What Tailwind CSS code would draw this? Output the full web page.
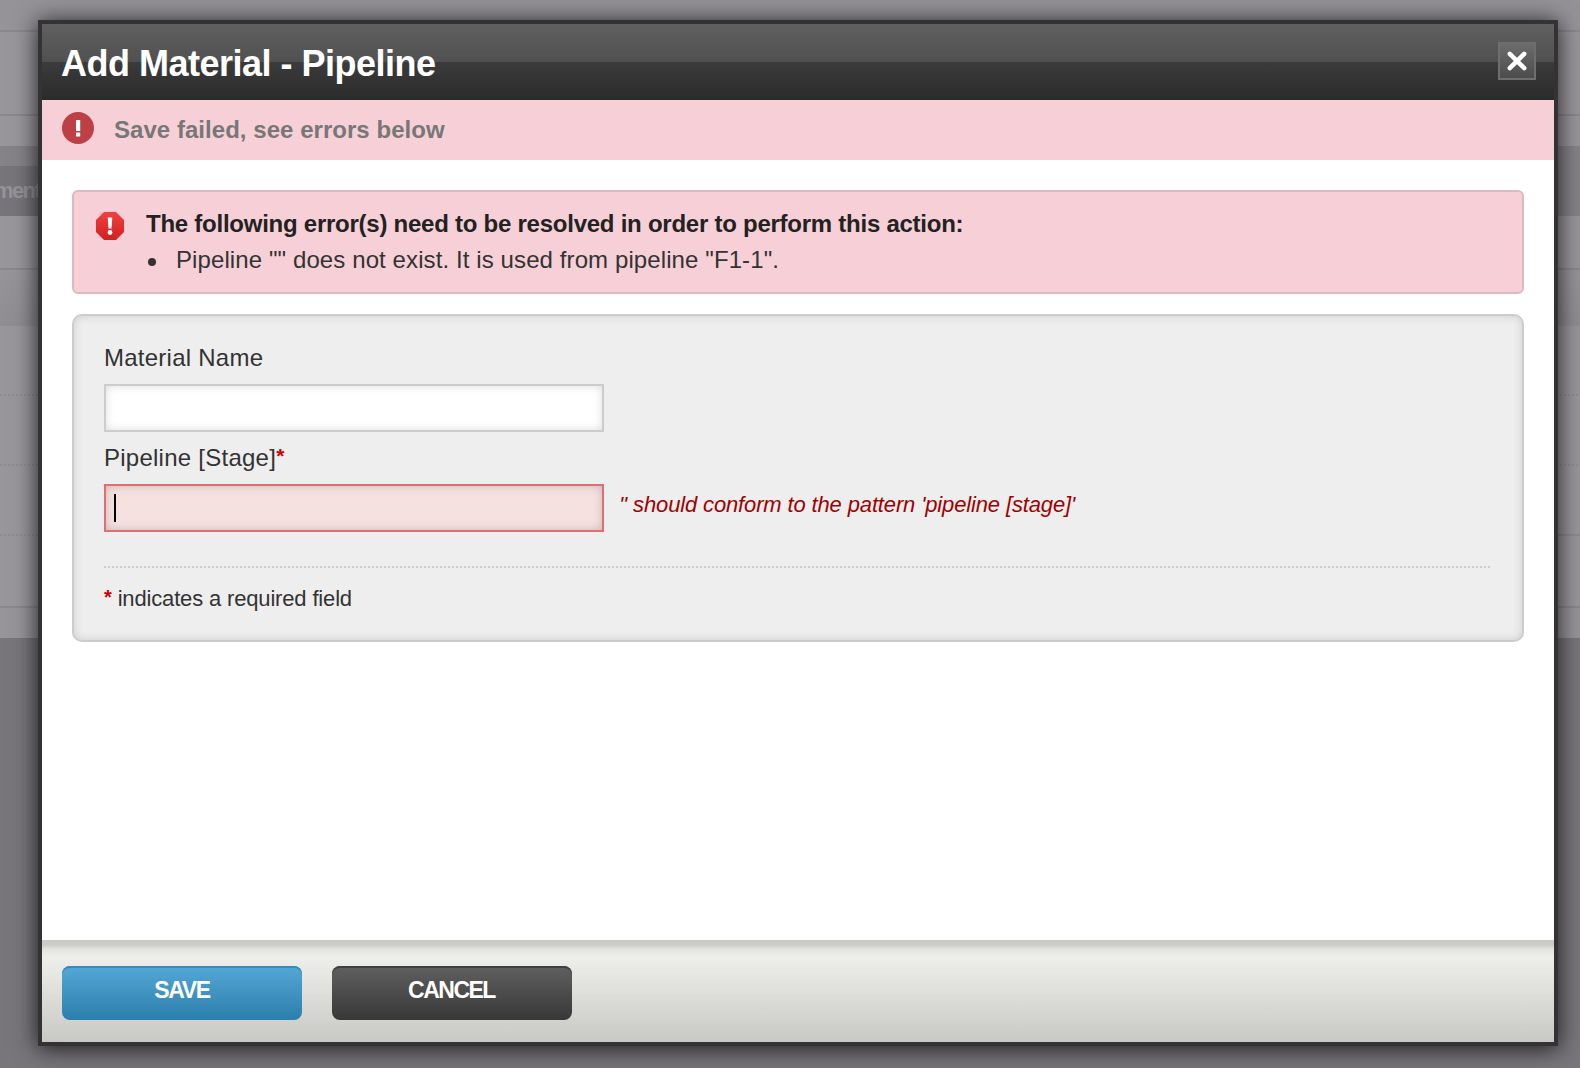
<!DOCTYPE html>
<html lang="en">
<head>
<meta charset="utf-8">
<title>Add Material - Pipeline</title>
<script src="https://cdn.jsdelivr.net/npm/@tailwindcss/browser@4"></script>
</head>
<body class="relative h-[1068px] w-[1580px] overflow-hidden bg-[#78757b] font-['Liberation_Sans',Arial,sans-serif] text-[#333]">
  <!-- dimmed page behind the dialog -->
  <div class="flex h-full flex-col">
    <div class="h-[30px] bg-linear-to-b from-[#949197] to-[#969399]"></div>
    <div class="h-[2px] bg-[#8a878d]"></div>
    <div class="h-[82px] bg-[#98959b]"></div>
    <div class="h-[2px] bg-[#8a878d]"></div>
    <div class="h-[30px] bg-[#98959b]"></div>
    <div class="h-[20px] bg-[#858288]"></div>
    <div class="flex h-[50px] bg-[#858288]">
      <div class="flex w-[100px] items-center bg-[#77747a] pb-[2px]">
        <span class="-ml-[6px] text-[22px] font-bold tracking-[-1.6px] text-[#959298]">ment</span>
      </div>
    </div>
    <div class="h-[52px] bg-[#98959b]"></div>
    <div class="h-[2px] bg-[#8a878d]"></div>
    <div class="h-[56px] bg-linear-to-b from-[#969399] to-[#8f8c92]"></div>
    <div class="h-[68px] bg-[#98959b]"></div>
    <div class="h-[70px] bg-[#98959b]"><div class="h-[2px] bg-[repeating-linear-gradient(90deg,#8d8a90_0_2px,#98959b_2px_4px)]"></div></div>
    <div class="h-[70px] bg-[#98959b]"><div class="h-[2px] bg-[repeating-linear-gradient(90deg,#8d8a90_0_2px,#98959b_2px_4px)]"></div></div>
    <div class="h-[72px] bg-[#98959b]"><div class="flex h-[2px]"><div class="w-[800px] bg-[repeating-linear-gradient(90deg,#8d8a90_0_2px,#98959b_2px_4px)]"></div><div class="grow bg-[#8d8a90]"></div></div></div>
    <div class="h-[2px] bg-[#8a878d]"></div>
    <div class="h-[30px] bg-[#969399]"></div>
  </div>

  <!-- dialog -->
  <div class="absolute left-[38px] top-[20px] flex h-[1026px] w-[1520px] flex-col border-4 border-[#333] bg-white shadow-[0_2px_22px_#000000cc]">
    <div class="flex h-[76px] shrink-0 items-center justify-between bg-[linear-gradient(#606060_0%,#505050_50%,#3b3b3b_50%,#2b2b2b_100%)] pl-[19px] pr-[18px]">
      <h1 class="pt-[3px] text-[36px] font-bold leading-[40px] tracking-[-0.5px] text-white">Add Material - Pipeline</h1>
      <button class="-mt-[2px] flex size-[38px] items-center justify-center border-2 border-[#6e6e6e] bg-linear-to-b from-[#6c6c6c] to-[#4c4c4c]">
        <svg width="20" height="20" viewBox="0 0 20 20" fill="none" stroke="#fff" stroke-width="4.500" stroke-linecap="round"><path d="M2.800 2.800 17.200 17.200M17.200 2.800 2.800 17.200"/></svg>
      </button>
    </div>
    <div class="flex h-[60px] shrink-0 items-center bg-[#f7d0d7] pl-5">
      <svg class="-mt-1" width="32" height="32" viewBox="0 0 32 32"><circle cx="16" cy="16" r="16" fill="#be4044"/><path d="M14 8h4.200v11h-4.200zM14 20.500h4.200v4h-4.200z" fill="#fff"/></svg>
      <p class="ml-5 text-[24px] font-bold leading-[28px] tracking-[0.04px] text-[#777]">Save failed, see errors below</p>
    </div>
    <div class="flex grow flex-col gap-5 px-[30px] pt-[30px]">
      <div class="flex h-[104px] rounded-[6px] border-2 border-[#e0b8c0] bg-[#f7d0d7] pl-[22px] pt-[20px]">
        <svg width="28" height="28" viewBox="0 0 28 28"><defs><linearGradient id="stop" x2="0" y2="1"><stop stop-color="#f04040"/><stop offset="1" stop-color="#d02020"/></linearGradient></defs><path d="M8 0h12l8 8v12l-8 8H8l-8-8V8z" fill="url(#stop)"/><path d="M11.700 5.500h4.600l-.8 11h-3z" fill="#fff"/><circle cx="14" cy="20.500" r="2.400" fill="#fff"/></svg>
        <div class="-mt-[4px] ml-[22px] pt-[2px]">
          <h2 class="text-[24px] font-bold leading-[28px] tracking-[-0.25px] text-[#222]">The following error(s) need to be resolved in order to perform this action:</h2>
          <ul class="mt-2">
            <li class="flex items-center text-[24px] leading-[28px] tracking-[0.1px]"><span class="ml-[2px] mr-[20px] mt-[3px] size-2 rounded-full bg-[#333]"></span><span>Pipeline "" does not exist. It is used from pipeline "F1-1".</span></li>
          </ul>
        </div>
      </div>
      <div class="h-[328px] rounded-[10px] border-2 border-[#ccc] bg-[#eee] px-[30px] pt-[28px] shadow-[inset_0_0_8px_#ccc]">
        <label class="block text-[24px] leading-[28px] tracking-[0.25px]">Material Name</label>
        <div class="mt-[12px] h-[48px] w-[500px] border-2 border-[#ccc] bg-white shadow-[inset_0_0_10px_#ddd]"></div>
        <label class="mt-[12px] flex h-7 text-[24px] leading-[28px] tracking-[0.25px]">Pipeline [Stage]<span class="-mt-[2px] text-[21px] font-bold text-[#c00]">*</span></label>
        <div class="mt-[12px] flex">
          <div class="flex h-[48px] w-[500px] items-center border-2 border-[#dc7070] bg-[#f6e1e1] pl-2 shadow-[inset_0_0_10px_#ccb4b4]"><span class="h-7 w-[2px] bg-black"></span></div>
          <em class="ml-[15px] mt-[8px] text-[22px] leading-[26px] tracking-[-0.14px] text-[#a00000]">'' should conform to the pattern 'pipeline [stage]'</em>
        </div>
        <div class="mt-[34px] h-[2px] bg-[repeating-linear-gradient(90deg,#ccc_0_2px,#eee_2px_4px)]"></div>
        <p class="mt-[17px] flex text-[22px] leading-[28px] tracking-[-0.16px]"><span class="-mt-[2px] mr-[6px] text-[20px] font-bold text-[#c00]">*</span>indicates a required field</p>
      </div>
    </div>
    <div class="flex h-[102px] shrink-0 gap-[30px] bg-[linear-gradient(#c8c9c6_0px,#cccdc8_5px,#e2e3de_9px,#eeefea_17px,#c8c9c4_102px)] pl-5 pt-[26px]">
      <button class="h-[54px] w-[240px] rounded-[8px] bg-linear-to-b from-[#54a8d5] to-[#2b7fac] pb-[6px] text-[23px] font-bold tracking-[-1.3px] text-white shadow-[inset_0_2px_0_#338dbb]">SAVE</button>
      <button class="h-[54px] w-[240px] rounded-[8px] bg-linear-to-b from-[#606060] to-[#383838] pb-[6px] pr-[1px] text-[23px] font-bold tracking-[-1.5px] text-white shadow-[inset_0_2px_0_#404040]">CANCEL</button>
    </div>
  </div>
</body>
</html>
